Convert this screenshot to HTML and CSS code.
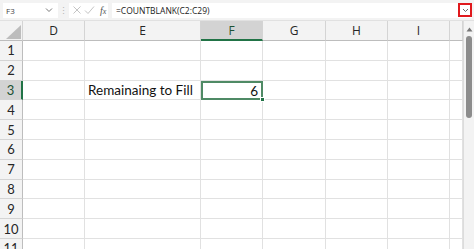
FILE: index.html
```html
<!DOCTYPE html>
<html>
<head>
  <link rel="stylesheet" href="styles.css">
</head>
<body>

  <div class="formula-bar">
    <div class="name-box">
      <span>F3</span>
      <svg width="8" height="6" viewBox="0 0 8 6"><path d="M1 1.5 L4 4.5 L7 1.5" fill="none" stroke="#777" stroke-width="1"/></svg>
    </div>
    <div class="grip">&#8942;</div>
    <div class="buttons">
      <svg width="10" height="10" viewBox="0 0 10 10"><path d="M1.5 1.5 L8.5 8.5 M8.5 1.5 L1.5 8.5" stroke="#c4c4c4" stroke-width="1"/></svg>
      <svg width="11" height="10" viewBox="0 0 11 10"><path d="M1 5.5 L4 8.5 L10 1.5" fill="none" stroke="#c4c4c4" stroke-width="1"/></svg>
      <span class="fx">f<i>x</i></span>
    </div>
    <div class="formula">
      <span>=COUNTBLANK(C2:C29)</span>
      <div class="expand">
        <svg width="7" height="5" viewBox="0 0 7 5"><path d="M1 1 L3.5 3.5 L6 1" fill="none" stroke="#666" stroke-width="1"/></svg>
      </div>
    </div>
  </div>

  <div class="sheet">
    <div class="grid">
      <!-- column headers -->
      <div class="corner"><svg width="15" height="14" viewBox="0 0 15 14"><path d="M15 0 L15 14 L0 14 Z" fill="#bdbdbd"/></svg></div>
      <div class="col-head">D</div>
      <div class="col-head">E</div>
      <div class="col-head active">F</div>
      <div class="col-head">G</div>
      <div class="col-head">H</div>
      <div class="col-head">I</div>
      <div class="col-head"></div>

      <!-- rows -->
      <div class="row-head">1</div><div class="cell"></div><div class="cell"></div><div class="cell"></div><div class="cell"></div><div class="cell"></div><div class="cell"></div><div class="cell"></div>
      <div class="row-head">2</div><div class="cell"></div><div class="cell"></div><div class="cell"></div><div class="cell"></div><div class="cell"></div><div class="cell"></div><div class="cell"></div>
      <div class="row-head active">3</div><div class="cell"></div><div class="cell label">Remainaing to Fill</div><div class="cell selected">6<span class="handle"></span></div><div class="cell"></div><div class="cell"></div><div class="cell"></div><div class="cell"></div>
      <div class="row-head">4</div><div class="cell"></div><div class="cell"></div><div class="cell"></div><div class="cell"></div><div class="cell"></div><div class="cell"></div><div class="cell"></div>
      <div class="row-head">5</div><div class="cell"></div><div class="cell"></div><div class="cell"></div><div class="cell"></div><div class="cell"></div><div class="cell"></div><div class="cell"></div>
      <div class="row-head">6</div><div class="cell"></div><div class="cell"></div><div class="cell"></div><div class="cell"></div><div class="cell"></div><div class="cell"></div><div class="cell"></div>
      <div class="row-head">7</div><div class="cell"></div><div class="cell"></div><div class="cell"></div><div class="cell"></div><div class="cell"></div><div class="cell"></div><div class="cell"></div>
      <div class="row-head">8</div><div class="cell"></div><div class="cell"></div><div class="cell"></div><div class="cell"></div><div class="cell"></div><div class="cell"></div><div class="cell"></div>
      <div class="row-head">9</div><div class="cell"></div><div class="cell"></div><div class="cell"></div><div class="cell"></div><div class="cell"></div><div class="cell"></div><div class="cell"></div>
      <div class="row-head">10</div><div class="cell"></div><div class="cell"></div><div class="cell"></div><div class="cell"></div><div class="cell"></div><div class="cell"></div><div class="cell"></div>
      <div class="row-head">11</div><div class="cell"></div><div class="cell"></div><div class="cell"></div><div class="cell"></div><div class="cell"></div><div class="cell"></div><div class="cell"></div>
    </div>

    <div class="scrollbar">
      <svg width="7" height="5" viewBox="0 0 7 5"><path d="M0.5 4.5 L3.5 0.5 L6.5 4.5 Z" fill="#777"/></svg>
      <div class="thumb"></div>
    </div>
  </div>

</body>
</html>
```

FILE: styles.css
```css
* {
  box-sizing: border-box;
  margin: 0;
  padding: 0;
}
body {
  width: 474px;
  height: 249px;
  overflow: hidden;
  background: white;
  font-family: "Open Sans", "Noto Sans", sans-serif;
  color: #333;
}

/* top formula bar */
.formula-bar {
  height: 21px;
  background: #f3f3f3;
  display: flex;
  align-items: center;
  padding: 0 2px 0 3px;
  border-bottom: 1px solid #e1e1e1;
}
.name-box {
  width: 55px;
  height: 15px;
  background: white;
  display: flex;
  align-items: center;
  justify-content: space-between;
  padding: 0 5px 0 3px;
  font-size: 8px;
  color: #444;
}
.grip {
  width: 11px;
  text-align: center;
  font-size: 9px;
  color: #b5b5b5;
}
.buttons {
  width: 39px;
  height: 15px;
  background: white;
  display: flex;
  align-items: center;
  gap: 2px;
  padding-left: 3px;
}
.fx {
  font-family: "Liberation Serif", serif;
  font-style: italic;
  font-size: 10px;
  color: #555;
  margin-left: 3px;
}
.fx i {
  font-size: 8px;
}
.formula {
  flex: 1;
  height: 15px;
  margin-left: 4px;
  background: white;
  display: flex;
  align-items: center;
  justify-content: space-between;
  padding-left: 4px;
  font-size: 8.5px;
  color: #222;
}
.expand {
  width: 14px;
  height: 14px;
  border: 2px solid #e0191d;
  display: flex;
  align-items: center;
  justify-content: center;
}

/* sheet */
.sheet {
  display: flex;
}
.grid {
  display: grid;
  grid-template-columns: 23px 62px 116px 62px 63px 62px 62px 13px;
  grid-template-rows: 20px repeat(11, 19.8px);
}
.corner {
  background: #f3f3f3;
  border-right: 1px solid #d4d4d4;
  border-bottom: 1px solid #bdbdbd;
  display: flex;
  align-items: flex-end;
  justify-content: flex-end;
  padding: 0 1px 1px 0;
}
.col-head {
  background: #f3f3f3;
  border-right: 1px solid #d4d4d4;
  border-bottom: 1px solid #bdbdbd;
  display: flex;
  align-items: center;
  justify-content: center;
  font-size: 12px;
  color: #262626;
}
.col-head.active {
  background: #d3d3d3;
  border-bottom: 2px solid #217346;
  color: #1d5134;
}
.row-head {
  background: #f3f3f3;
  border-right: 1px solid #bdbdbd;
  border-bottom: 1px solid #d4d4d4;
  display: flex;
  align-items: center;
  justify-content: center;
  font-family: "Lato", sans-serif;
  font-size: 13px;
  color: #262626;
}
.row-head.active {
  background: #d3d3d3;
  border-right: 2px solid #217346;
  color: #1d5134;
}
.cell {
  border-right: 1px solid #e1e1e1;
  border-bottom: 1px solid #e1e1e1;
  font-family: "Lato", sans-serif;
  font-size: 13.5px;
  color: #111;
  display: flex;
  align-items: center;
}
.cell.label {
  padding-left: 3px;
}
.cell.selected {
  position: relative;
  justify-content: flex-end;
  padding-right: 3px;
  border: 2px solid #4f8a65;
}
.handle {
  position: absolute;
  right: -4px;
  bottom: -4px;
  width: 5px;
  height: 5px;
  background: #217346;
  border: 1px solid white;
}
.scrollbar {
  width: 11px;
  height: 229px;
  background: #f3f3f3;
  border-left: 1px solid #dcdcdc;
  display: flex;
  flex-direction: column;
  align-items: center;
  padding-top: 6px;
  gap: 4px;
}
.thumb {
  width: 6px;
  height: 82px;
  background: #8c8c8c;
  border-radius: 3px;
}
```
